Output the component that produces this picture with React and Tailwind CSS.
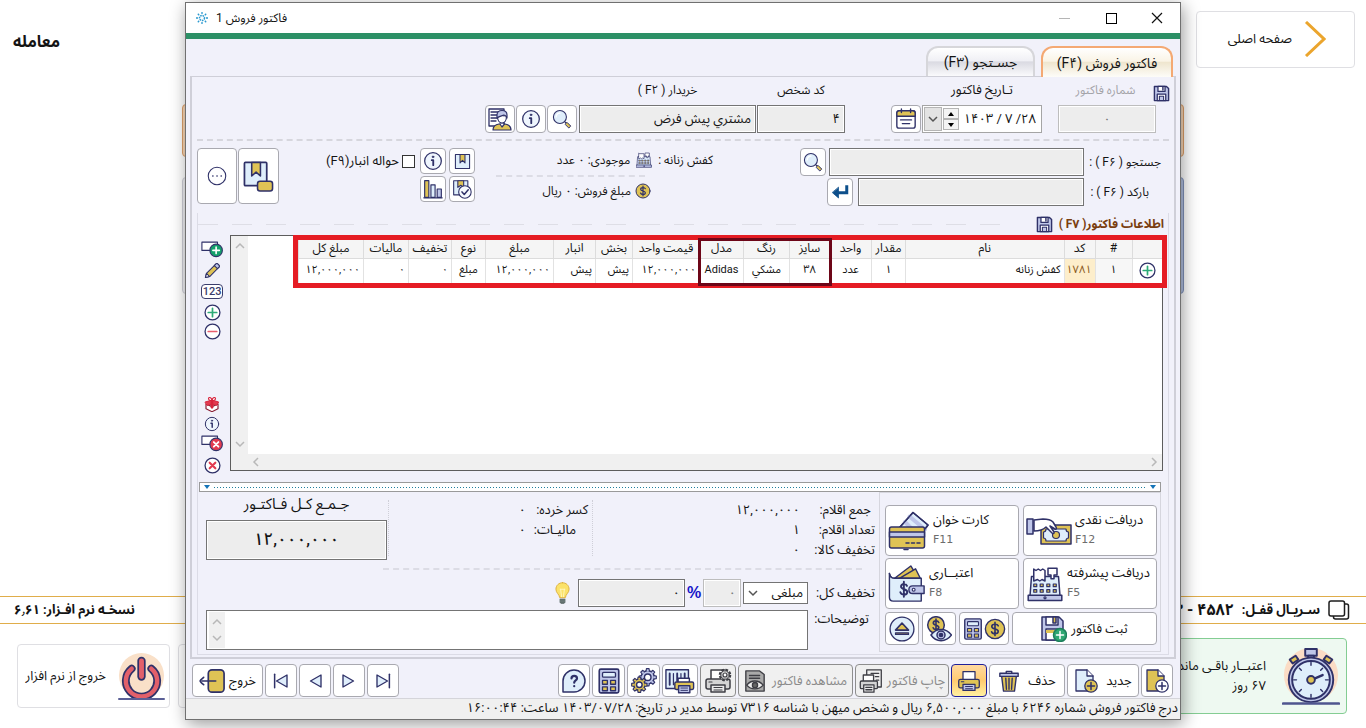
import React, { useState } from 'react';

const NAVY = '#2f3168';
const GOLD = '#dfc355';
const ICE = '#dfeefb';
const LILAC = '#bfc6e9';

function Svg({ className = 'w-6 h-6', children, box = '0 0 24 24' }) {
    return (
        <svg viewBox={box} className={`shrink-0 ${className}`} fill="none" stroke={NAVY} strokeWidth="1.5" strokeLinecap="round" strokeLinejoin="round" aria-hidden="true">
            {children}
        </svg>
    );
}

const FloppyIcon = ({ className }) => (
    <Svg className={className}>
        <path d="M2 2h17l3 3v17H2z" fill={LILAC} strokeWidth="2" />
        <path d="M7 2h10v7H7z" fill="#fff" strokeWidth="1.8" />
        <path d="M14 3.5v3.5" strokeWidth="2" />
        <path d="M6 13h12v9H6z" fill="#fff" strokeWidth="1.8" />
        <path d="M9 16h6v6H9z" fill={LILAC} />
    </Svg>
);

const FloppyPlusIcon = ({ className }) => (
    <Svg className={className} box="0 0 26 26">
        <path d="M1 1h17l4 4v19H1z" fill={LILAC} />
        <path d="M5 1h12v8H5z" fill="#fff" />
        <path d="M12 1h3v6h-3z" fill={GOLD} />
        <path d="M5 13h13v11H5z" fill="#fff" />
        <path d="M5 14h9v3H5z" fill={GOLD} stroke="none" />
        <circle cx="19" cy="19" r="6.500" fill="#2fa873" stroke="#1d7f5c" />
        <path d="M19 15.500v7M15.500 19h7" stroke="#fff" />
    </Svg>
);

const MagnifierIcon = ({ className }) => (
    <Svg className={className}>
        <path d="M14 14l3 3" />
        <path d="M16 18l2-2 4.500 4.500-2 2z" fill={GOLD} strokeWidth="1.2" />
        <circle cx="9.500" cy="9.500" r="7.800" fill={ICE} strokeWidth="1.3" />
        <path d="M5 9.500a4.500 4.500 0 0 1 4.500-4.500" stroke="#fff" />
    </Svg>
);

const InfoIcon = ({ className }) => (
    <Svg className={className}>
        <circle cx="12" cy="12" r="10" fill="#eef5fd" />
        <circle cx="12" cy="7" r="1" fill={NAVY} strokeWidth="1" />
        <path d="M10.500 11h1.800v6" strokeWidth="2.200" />
    </Svg>
);

const CalendarIcon = ({ className }) => (
    <Svg className={className}>
        <rect x="2" y="3" width="20" height="19" rx="2.500" fill="#fff" />
        <path d="M2 9V5.500A2.500 2.500 0 0 1 4.500 3h15A2.500 2.500 0 0 1 22 5.500V9z" fill={GOLD} />
        <path d="M7 1v4M17 1v4M6 13h12M8 17h8" />
    </Svg>
);

const CustomerIcon = ({ className }) => (
    <Svg className={className}>
        <path d="M1 2h15v17H1z" fill="#fff" strokeWidth="1.300" />
        <path d="M3 5h8M3 8h6M3 11h6M3 14h5" strokeWidth="1.300" />
        <path d="M5 23c0-4 3-5.500 6-6h6c3 .5 6 2 6 6z" fill={GOLD} strokeWidth="1.200" />
        <path d="M12 17l2 3 2.500-3" fill="#fff" strokeWidth="1.200" />
        <path d="M9.500 9.500c0 4 2 6.500 4.500 6.500s4.500-2.500 4.500-6.500" fill="#fff" strokeWidth="1.200" />
        <path d="M9 11V8c0-3 2-4.500 5-4.500S19 5 19 8v3c-1-2-2-3-3-3-2 1-5 1-7 3z" fill={LILAC} strokeWidth="1.200" />
    </Svg>
);

const EnterIcon = ({ className }) => (
    <Svg className={className}>
        <path d="M21 3v10H8" stroke="#0d4f8b" strokeWidth="4" strokeLinecap="butt" strokeLinejoin="miter" />
        <path d="M10 6v14l-8-7z" fill="#0d4f8b" stroke="#0d4f8b" strokeWidth="1" />
    </Svg>
);

const RegisterIcon = ({ className }) => (
    <Svg className={className}>
        <path d="M3 7h18l1 13H2z" fill={ICE} strokeWidth="1" />
        <path d="M4.500 2l1.500 1 1.500-1 1.500 1 1.500-1 1.500 1v7l-2-1-1.500 1L7 9l-2.500 1z" fill="#fff" strokeWidth="1" />
        <path d="M14 1.500h6v4.500h-2v2.500h-2V6h-2z" fill="#fff" strokeWidth="1" />
        <path d="M4.500 12h2v1.800h-2zM8.800 12h2v1.800h-2zM13.200 12h2v1.800h-2zM17.500 12h2v1.800h-2zM4.500 15.700h2v1.800h-2zM8.800 15.700h2v1.800h-2zM13.200 15.700h2v1.800h-2zM17.500 15.700h2v1.800h-2z" fill={GOLD} strokeWidth=".8" />
        <path d="M.8 19.500h22.400V23H.8z" fill={LILAC} strokeWidth="1" />
        <circle cx="12" cy="21.200" r=".7" strokeWidth=".8" />
    </Svg>
);

const CoinIcon = ({ className }) => (
    <Svg className={className}>
        <circle cx="12" cy="12" r="10.500" fill={GOLD} />
        <path d="M15.500 8.500C15 7 13.700 6.800 12 6.800c-2 0-3.500.9-3.500 2.500 0 3.600 7 1.800 7 5.200 0 1.700-1.500 2.700-3.500 2.700-1.800 0-3.200-.7-3.700-2.200M12 4.800v14.400" strokeWidth="1.800" />
    </Svg>
);

const BookmarkBoxIcon = ({ className }) => (
    <Svg className={className}>
        <path d="M2 2h20v20H2z" fill={ICE} />
        <path d="M8.500 2h7v12L12 10.500 8.500 14z" fill={GOLD} />
    </Svg>
);

const BookmarkTagIcon = ({ className }) => (
    <Svg className={className} box="0 0 32 32">
        <rect x="1.500" y="1.500" width="23" height="24" rx="1" fill={ICE} strokeWidth="1.800" />
        <path d="M9 1.500h9v14l-4.500-4-4.500 4z" fill={GOLD} strokeWidth="1.600" />
        <rect x="15" y="21" width="15.500" height="10" rx="2.500" fill={GOLD} strokeWidth="1.600" />
    </Svg>
);

const BoxCheckIcon = ({ className }) => (
    <Svg className={className}>
        <path d="M2 2h17v17H2z" fill={ICE} strokeWidth="1.300" />
        <path d="M7 2h7v8l-3.500-2.500L7 10z" fill={GOLD} strokeWidth="1.300" />
        <circle cx="15.500" cy="15.500" r="7.500" fill="#f6f9fe" strokeWidth="1.300" />
        <path d="M12 15.500l2.700 3 4.800-5.500" strokeWidth="1.800" />
    </Svg>
);

const ChartIcon = ({ className }) => (
    <Svg className={className}>
        <path d="M2 2h5v20H2z" fill={GOLD} strokeWidth="1.400" />
        <path d="M9.500 7h5v15h-5z" fill={ICE} strokeWidth="1.400" />
        <path d="M17 12h5v10h-5z" fill={LILAC} strokeWidth="1.400" />
        <path d="M1 22.500h22" />
    </Svg>
);

const DotsIcon = ({ className }) => (
    <Svg className={className}>
        <circle cx="12" cy="12" r="10.500" strokeWidth="1.300" />
        <path d="M7 12h.1M12 12h.1M17 12h.1" strokeWidth="2" />
    </Svg>
);

const RowAddIcon = ({ className, remove = false }) => (
    <Svg className={className} box="0 0 24 18">
        <path d="M1 1.500h17v9H1z" fill="#fff" strokeWidth="1.200" />
        <circle cx="16.500" cy="10.500" r="6.800" fill={remove ? '#e23b50' : '#14a06a'} strokeWidth="1.200" />
        {remove
            ? <path d="M14 8l5 5M19 8l-5 5" stroke="#fff" strokeWidth="2" />
            : <path d="M16.500 7v7M13 10.500h7" stroke="#fff" strokeWidth="1.800" />}
    </Svg>
);

const PencilIcon = ({ className }) => (
    <Svg className={className}>
        <path d="M2 22l1.500-6L17 2.500c1.500-1.500 6 3 4.500 4.500L8 20.500z" fill={GOLD} />
        <path d="M2 22l1.500-6L8 20.500z" fill="#fff" />
        <path d="M14.500 5L17 2.500c1.500-1.500 6 3 4.500 4.500L19 9.500z" fill={LILAC} />
    </Svg>
);

const CirclePlusIcon = ({ className }) => (
    <Svg className={className}>
        <circle cx="12" cy="12" r="10.500" fill="#fff" strokeWidth="1.800" />
        <path d="M12 6v12M6 12h12" stroke="#2eab78" strokeWidth="2.400" />
    </Svg>
);

const CircleMinusIcon = ({ className }) => (
    <Svg className={className}>
        <circle cx="12" cy="12" r="10.500" fill="#fff" strokeWidth="1.800" />
        <path d="M6 12h12" stroke="#e85d6d" strokeWidth="2.400" />
    </Svg>
);

const CircleXIcon = ({ className }) => (
    <Svg className={className}>
        <circle cx="12" cy="12" r="10.500" fill="#fff" strokeWidth="1.800" />
        <path d="M8 8l8 8M16 8l-8 8" stroke="#e23b50" strokeWidth="3" />
    </Svg>
);

const GiftIcon = ({ className }) => (
    <Svg className={className}>
        <g stroke="#d8243c">
            <path d="M3 12l9 4 9-4v7l-9 4.500L3 19z" fill="#fff" stroke="#8a2035" strokeWidth="1.800" />
            <path d="M2 9l10-3 10 3-3 5-7-2-7 2z" fill="#e23b50" />
            <path d="M12 7C8 7 6 5 7 3s5 0 5 4zM12 7c4 0 6-2 5-4s-5 0-5 4z" fill="#fff" strokeWidth="1.800" />
            <path d="M12 7v10" strokeWidth="4" />
        </g>
    </Svg>
);

const CardsIcon = ({ className }) => (
    <Svg className={className} box="0 0 42 40">
        <path d="M12 16L25 1.500 40 14 33 24z" fill={ICE} />
        <path d="M17 11L30 24M21.500 5.500L37 18.500" stroke={LILAC} strokeWidth="4" />
        <path d="M12 16L25 1.500 40 14 36 19" />
        <rect x="1.500" y="16" width="35" height="21" rx="2" fill={GOLD} />
        <path d="M1.500 21h35v5h-35z" fill={LILAC} />
        <path d="M18 32h3M23.500 32h3M29 32h3M16 38.500h4" />
    </Svg>
);

const CashIcon = ({ className }) => (
    <Svg className={className} box="0 0 46 28">
        <path d="M15 8h30v19H15z" fill={GOLD} />
        <path d="M20 12h20c0 2 1 3 2.500 3v6c-1.500 0-2.500 1-2.500 3H20c0-2-1-3-2.500-3v-6c1.500 0 2.500-1 2.500-3z" fill={ICE} strokeWidth="1.200" />
        <circle cx="30" cy="18" r="3.500" fill={GOLD} strokeWidth="1.200" />
        <path d="M8 3l9-1c5 0 8 1 10 3l3 5c1 1.500 0 2.500-1 2l-5-3 4 6c.5 1.500-1 2-2 1l-6-6c-3 3-8 4-12 4z" fill="#fff" />
        <path d="M1 2h6v15H1z" fill={LILAC} />
    </Svg>
);

const WalletIcon = ({ className }) => (
    <Svg className={className} box="0 0 40 40">
        <path d="M7 14L24 1l8 13z" fill={GOLD} />
        <path d="M12 14L29 4l5 10z" fill={GOLD} />
        <path d="M1.500 9c1 4 3 5 5 5" />
        <path d="M1.500 9v25c0 2.500 1 4 4 4H35V14H7c-3 0-5-2-5.500-5z" fill={ICE} />
        <path d="M22 26c0-3 2-4 4-4h12v8H26c-2 0-4-1-4-4z" fill={LILAC} />
        <circle cx="27" cy="26" r="1.500" fill="#fff" strokeWidth="1.200" />
        <path d="M20 22c-.5-1.500-1.800-2-3.300-2-1.700 0-3 1-3 2.600 0 3.600 6.600 2.200 6.600 5.800 0 1.800-1.500 2.800-3.500 2.800s-3.300-.8-3.800-2.500M16.700 17.500v16" strokeWidth="2" />
    </Svg>
);

const CalcIcon = ({ className }) => (
    <Svg className={className}>
        <rect x="3" y="1" width="18" height="22" rx="1.500" fill={LILAC} />
        <rect x="6" y="4" width="12" height="4.500" rx="1" fill={ICE} strokeWidth="1.200" />
        <path d="M6 11.500h4.500v3.500H6zM13.500 11.500H18v3.500h-4.500zM6 17.500h4.500V21H6zM13.500 17.500H18V21h-4.500z" fill={GOLD} strokeWidth="1.200" />
    </Svg>
);

const CoinEyeIcon = ({ className }) => (
    <Svg className={className} box="0 0 26 26">
        <circle cx="10" cy="9" r="8.300" fill={GOLD} />
        <path d="M12.800 6.500c-.5-1.200-1.500-1.600-2.800-1.600-1.500 0-2.700.8-2.700 2.100 0 2.800 5.500 1.600 5.500 4.300 0 1.400-1.200 2.200-2.800 2.200-1.400 0-2.500-.6-2.900-1.800M10 3v12" strokeWidth="1.600" />
        <path d="M5 19c5-7.500 15-7.500 20.500 0-5.500 7.500-15.500 7.500-20.500 0z" fill={ICE} />
        <circle cx="15" cy="19" r="4" fill={LILAC} />
        <circle cx="15" cy="19" r="1.600" fill={NAVY} />
    </Svg>
);

const EjectIcon = ({ className }) => (
    <Svg className={className}>
        <circle cx="12" cy="12" r="11" fill={ICE} strokeWidth="1.200" />
        <path d="M12 6.500l6 6.500H6z" fill={GOLD} />
        <path d="M6 15.500h12v1.500H6z" fill={GOLD} strokeWidth="1.100" />
    </Svg>
);

const BulbIcon = ({ className }) => (
    <Svg className={className} box="0 0 16 24">
        <path d="M8 1C4 1 1 4 1 8c0 4 3.500 5 4 9h6c.5-4 4-5 4-9 0-4-3-7-7-7z" fill="#fbe26a" stroke="#dcae3c" strokeWidth="1" />
        <path d="M6 8l1 8M10 8l-1 8M5.500 8h5" stroke="#fff6c0" strokeWidth="1" />
        <path d="M5 18h6v4l-1.500 1.500h-3L5 22z" fill="#4d5a58" stroke="none" />
        <path d="M5 19.500h6M5 21.500h6" stroke="#9aa" strokeWidth=".7" />
    </Svg>
);

const PageAddIcon = ({ className, gold = false }) => (
    <Svg className={className}>
        <path d="M2 1h11l6 6v15H2z" fill={gold ? GOLD : ICE} strokeWidth="1.300" />
        <path d="M13 1v6h6" fill="#fff" strokeWidth="1.300" />
        <circle cx="17" cy="17" r="6.200" fill={gold ? '#fff' : GOLD} strokeWidth="1.300" />
        <path d="M17 13.500v7M13.500 17h7" />
    </Svg>
);

const TrashIcon = ({ className }) => (
    <Svg className={className}>
        <path d="M4 7h16l-2 16H6z" fill={GOLD} />
        <path d="M8.500 9l.7 12M12 9v12M15.500 9l-.7 12" />
        <path d="M2 3.500h20V7H2z" fill={LILAC} />
        <path d="M9 3.500v-2h6v2" />
    </Svg>
);

const PrinterIcon = ({ className, muted = false, gear = false }) => (
    <Svg className={className} box="0 0 28 26">
        <g stroke={muted ? '#3e3e44' : NAVY}>
            <path d="M7 11V2h14v9" fill="#fff" />
            <rect x="2" y="11" width="24" height="10" rx="2" fill={muted ? '#d4d4d4' : GOLD} />
            <path d="M7 17h14v7H7z" fill={muted ? '#e9e9e9' : LILAC} />
            <path d="M10 19.500h8M10 22h8M5 14h3" strokeWidth="1.200" />
            {gear && (
                <>
                    <circle cx="21" cy="7" r="5" fill="#ddd" strokeDasharray="2.500 1.400" strokeWidth="2.600" strokeLinecap="butt" />
                    <circle cx="21" cy="7" r="4.200" fill="#ddd" strokeWidth="1" />
                    <circle cx="21" cy="7" r="2" fill="#fff" strokeWidth="1.200" />
                </>
            )}
        </g>
    </Svg>
);

const PrintPagesIcon = ({ className }) => (
    <Svg className={className} box="0 0 28 28">
        <g stroke="#3e3e44">
            <path d="M9 1h17v20H9z" fill="#eee" />
            <path d="M14 5h9M19 9h4M20 13h3" />
            <path d="M5 14V7h12v7" fill="#fff" />
            <rect x="1.500" y="14" width="20" height="9" rx="1.500" fill="#d4d4d4" />
            <path d="M5.500 18.500h12V27h-12z" fill="#e9e9e9" />
            <path d="M8 21.500h7M8 24.200h7" />
        </g>
    </Svg>
);

const PreviewIcon = ({ className }) => (
    <Svg className={className}>
        <g stroke="#3e3e44">
            <path d="M2 1h15l5 4v18H2z" fill="#a9a9a9" />
            <path d="M6 6h11M6 9h11" />
            <path d="M3 16.500c4.500-6 13-6 18 0-5 5.500-13.500 5.500-18 0z" fill="#eee" />
            <circle cx="12" cy="16.500" r="2.800" fill="#666" />
        </g>
    </Svg>
);

const BarcodePrintIcon = ({ className }) => (
    <Svg className={className} box="0 0 32 28">
        <path d="M1 2h24v20H1z" fill={ICE} />
        <path d="M5 6v12M13 6v8M21 6v4" strokeWidth="2" />
        <path d="M9 6v12M17 6v5" strokeWidth="1.300" />
        <path d="M14 15v-4h12v4" fill="#fff" />
        <rect x="10.500" y="15" width="20" height="8" rx="1.500" fill={GOLD} />
        <path d="M14.500 19h12v7.500h-12z" fill={LILAC} />
        <path d="M17 21.500h7M17 24h7" strokeWidth="1" />
    </Svg>
);

const Gear = ({ x, y, r, fill }) => (
    <g>
        <circle cx={x} cy={y} r={r} fill={fill} />
        {[0, 45, 90, 135, 180, 225, 270, 315].map((a) => (
            <path key={a} transform={`translate(${x} ${y}) rotate(${a})`} d={`M-1.800 ${-r + 0.6}L-1.400 ${-r - 2.2}H1.400L1.800 ${-r + 0.6}`} fill={fill} strokeWidth="1.200" />
        ))}
        <circle cx={x} cy={y} r={r - 0.9} fill={fill} stroke="none" />
        <circle cx={x} cy={y} r={r * 0.5} fill="#fff" />
    </g>
);

const GearsIcon = ({ className }) => (
    <Svg className={className} box="0 0 30 28">
        <Gear x={19} y={10} r={7} fill={LILAC} />
        <Gear x={10} y={18} r={6} fill={GOLD} />
    </Svg>
);

const HelpIcon = ({ className }) => (
    <Svg className={className}>
        <path d="M1 23V12A11 11 0 1 1 12 23z" fill={ICE} />
        <path d="M9.500 9.500c0-3.500 5.500-3.500 5.500 0 0 2-2.800 2-2.800 4.200M12.200 17v.2" strokeWidth="2.200" />
    </Svg>
);

const ExitIcon = ({ className }) => (
    <Svg className={className} box="0 0 28 28">
        <rect x="10" y="2" width="17" height="24" rx="4" fill={GOLD} strokeWidth="1.800" />
        <path d="M18 14H3" strokeWidth="1.800" />
        <path d="M5 10c-5 4-5 4 0 8" strokeWidth="1.800" />
    </Svg>
);

const StepIcon = ({ className, flip = false, bar = false }) => (
    <Svg className={`${className} ${flip ? '-scale-x-100' : ''}`}>
        <path d="M20 4v16L6 12z" fill={ICE} strokeWidth="1.800" />
        {bar && <path d="M3.500 3v18" strokeWidth="2" />}
    </Svg>
);

const PowerIcon = ({ className }) => (
    <Svg className={className} box="0 0 48 48">
        <circle cx="24" cy="23" r="23" fill="#f9e0c8" stroke="none" />
        <path d="M14 16a16 16 0 1 0 20 0" strokeWidth="8" />
        <path d="M24 8v16" strokeWidth="8.500" />
        <path d="M14 16a16 16 0 1 0 20 0" strokeWidth="4.500" stroke="#e2606a" />
        <path d="M24 8v16" strokeWidth="5" stroke="#e2606a" />
        <path d="M1 47h46" stroke="#5a5f96" strokeWidth="2" />
    </Svg>
);

const StopwatchIcon = ({ className }) => (
    <Svg className={className} box="0 0 60 60">
        <circle cx="30" cy="29" r="28" fill="#fbdcc5" stroke="none" />
        <path d="M24 2h12v7H24z" fill={LILAC} strokeWidth="2" />
        <path d="M27 9h6v6h-6z" fill={LILAC} strokeWidth="2" />
        <path d="M8 13l6-4 3 4-6 4zM52 13l-6-4-3 4 6 4z" fill={GOLD} strokeWidth="2" />
        <circle cx="30" cy="34" r="23" fill={LILAC} strokeWidth="2" />
        <circle cx="30" cy="34" r="19.500" fill={ICE} strokeWidth="2" />
        <path d="M30 16v3M30 49v3M12 34h3M45 34h3M18 22l2 2M42 22l-2 2M18 46l2-2M42 46l-2-2" strokeWidth="1.500" />
        <path d="M33 33l9-4" strokeWidth="2.500" />
        <circle cx="30" cy="34" r="4" fill={GOLD} strokeWidth="2" />
        <path d="M1 58.500h58" strokeWidth="2.500" stroke="#4f558f" />
    </Svg>
);

const CopyIcon = ({ className }) => (
    <svg viewBox="0 0 22 20" className={`shrink-0 ${className}`} fill="#fff" stroke="#1d1d1d" strokeWidth="1.500" aria-hidden="true">
        <rect x="5.500" y="4" width="15" height="15" rx="2" />
        <rect x="1" y="1" width="15.500" height="15" rx="2" />
    </svg>
);

const Chevron = ({ className, d = 'M2 4l4 4 4-4' }) => (
    <svg viewBox="0 0 12 12" className={`shrink-0 ${className}`} fill="none" stroke="currentColor" strokeWidth="1.500" aria-hidden="true">
        <path d={d} />
    </svg>
);

const field = 'border border-[#747474] bg-[#ededed] shadow-[inset_0_0_0_1px_#fff] outline-none px-1';
const mutedField = 'border border-[#bdbdbd] bg-[#ededed] shadow-[inset_0_0_0_1px_#fff] text-[#777]';
const btn = 'flex items-center justify-center bg-white border border-[#a9a9b0] rounded';
const headLabel = 'flex items-center justify-center h-6 mb-[3px]';

function IconButton({ label, className, children }) {
    return <button type="button" aria-label={label} className={`${btn} shrink-0 ${className}`}>{children}</button>;
}

const columns = [
    { head: '', width: 'w-[30px]', cell: 'px-0' },
    { head: '#', width: 'w-[37px]', value: '۱', cell: 'text-center bg-[#f7f7f7]' },
    { head: 'کد', width: 'w-[31px]', value: '۱۷۸۱', cell: 'text-center bg-[#fdeecb] text-[#8a5a1c]' },
    { head: 'نام', width: '', value: 'کفش زنانه', cell: 'text-right' },
    { head: 'مقدار', width: 'w-[34px]', value: '۱', cell: 'text-center' },
    { head: 'واحد', width: 'w-[42px]', value: 'عدد', cell: 'text-center' },
    { head: 'سایز', width: 'w-[40px]', value: '۳۸', cell: 'text-center' },
    { head: 'رنگ', width: 'w-[46px]', value: 'مشکي', cell: 'text-center' },
    { head: 'مدل', width: 'w-[44px]', value: 'Adidas', cell: 'text-center' },
    { head: 'قیمت واحد', width: 'w-[67px]', value: '۱۲,۰۰۰,۰۰۰', cell: 'text-right' },
    { head: 'بخش', width: 'w-[37px]', value: 'پیش', cell: 'text-right' },
    { head: 'انبار', width: 'w-[42px]', value: 'پیش', cell: 'text-right' },
    { head: 'مبلغ', width: 'w-[68px]', value: '۱۲,۰۰۰,۰۰۰', cell: 'text-right' },
    { head: 'نوع', width: 'w-[34px]', value: 'مبلغ', cell: 'text-center' },
    { head: 'تخفیف', width: 'w-[43px]', value: '۰', cell: 'text-right' },
    { head: 'مالیات', width: 'w-[45px]', value: '۰', cell: 'text-right' },
    { head: 'مبلغ کل', width: 'w-[65px]', value: '۱۲,۰۰۰,۰۰۰', cell: 'text-right' },
];

function TitleBar() {
    return (
        <header dir="ltr" className="h-[30px] bg-white flex items-center pl-2.5 pr-[17px] text-xs">
            <svg viewBox="0 0 12 12" className="w-3 h-3 mr-2" fill="none" stroke="#2c9ad0" strokeWidth="1.500" aria-hidden="true">
                <circle cx="6" cy="6" r="2.500" strokeDasharray="1.600 .8" />
                <path d="M6 0v2M6 10v2M0 6h2M10 6h2M1.800 1.800l1.400 1.400M8.800 8.800l1.400 1.400M10.200 1.800L8.800 3.200M3.200 8.800l-1.400 1.400" strokeWidth="1.300" />
            </svg>
            <h1 dir="rtl" className="flex-1 text-end">فاکتور فروش 1</h1>
            <div className="flex items-center gap-[34px]">
                <button type="button" aria-label="کوچک کردن" className="w-3 h-3 flex items-center"><span className="block w-[11px] h-px bg-[#b5b5b5]" /></button>
                <button type="button" aria-label="بزرگ کردن" className="w-3 h-3 flex items-center justify-center"><span className="block w-[11px] h-[11px] border border-black" /></button>
                <button type="button" aria-label="بستن" className="w-3 h-3">
                    <svg viewBox="0 0 12 12" className="w-3 h-3" stroke="#111" strokeWidth="1.200"><path d="M1 1l10 10M11 1L1 11" /></svg>
                </button>
            </div>
        </header>
    );
}

function InvoiceHead() {
    return (
        <div className="flex items-end h-14 pr-1">
            <div className="w-28">
                <div className="flex items-end h-6 mb-[3px]">
                    <FloppyIcon className="w-[17px] h-[17px]" />
                    <label htmlFor="number" className="flex-1 h-6 leading-6 text-center text-[#a3a3a8]">شماره فاکتور</label>
                </div>
                <div className="pr-3.5">
                    <input id="number" disabled defaultValue="۰" className={`${mutedField} w-full h-7 text-center`} />
                </div>
            </div>
            <div className="w-[120px] mr-4">
                <label htmlFor="date" className={`${headLabel} text-[13px]`}>تـاریخ فاکتور</label>
                <div dir="ltr" className="flex items-center h-7 bg-white border border-[#a5a5a5] p-px">
                    <button type="button" aria-label="انتخاب تاریخ" className="w-[18px] h-6 flex items-center justify-center bg-[#e3e3e3] border border-[#b5b5b5] text-[#555]">
                        <Chevron className="w-3 h-3" />
                    </button>
                    <div className="flex flex-col w-4 ml-px text-black">
                        <button type="button" aria-label="بیشتر" className="h-[11px] bg-[#f4f4f4] border border-[#b5b5b5] flex items-center justify-center"><svg viewBox="0 0 6 4" className="w-1.5 h-1"><path d="M0 4h6L3 0z" /></svg></button>
                        <button type="button" aria-label="کمتر" className="h-[11px] bg-[#f4f4f4] border border-[#b5b5b5] flex items-center justify-center"><svg viewBox="0 0 6 4" className="w-1.5 h-1"><path d="M0 0h6L3 4z" /></svg></button>
                    </div>
                    <input id="date" defaultValue="۱۴۰۳ / ۷ /۲۸" className="flex-1 min-w-0 h-full text-right pr-1 text-[13px] outline-none" />
                </div>
            </div>
            <IconButton label="تقویم" className="w-[30px] h-7 mr-px"><CalendarIcon className="w-[22px] h-[22px]" /></IconButton>
            <div className="w-[88px] mr-[46px]">
                <label htmlFor="person" className={headLabel}>کد شخص</label>
                <input id="person" defaultValue="۴" className={`${field} w-full h-7 text-[13px]`} />
            </div>
            <div className="w-[177px] mr-px">
                <label htmlFor="buyer" className={headLabel}>خریدار ( F۲ )</label>
                <input id="buyer" defaultValue="مشتري پیش فرض" className={`${field} w-full h-7 text-[13px]`} />
            </div>
            <div className="flex gap-px mr-0.5">
                <IconButton label="جستجوی خریدار" className="w-[30px] h-7"><MagnifierIcon className="w-5 h-5" /></IconButton>
                <IconButton label="اطلاعات خریدار" className="w-[30px] h-7"><InfoIcon className="w-5 h-5" /></IconButton>
                <IconButton label="پرونده خریدار" className="w-[30px] h-7"><CustomerIcon className="w-6 h-6" /></IconButton>
            </div>
        </div>
    );
}

function ItemSearch() {
    return (
        <div className="flex items-start pt-[7px] pr-[13px] pl-[5px]">
            <div className="flex flex-col gap-0.5">
                <div className="flex items-center">
                    <label htmlFor="search" className="w-[77px] whitespace-nowrap">جستجو ( F۶ ) :</label>
                    <input id="search" className={`${field} w-[255px] h-7`} />
                    <IconButton label="جستجو" className="w-[26px] h-7 mr-[3px]"><MagnifierIcon className="w-5 h-5" /></IconButton>
                </div>
                <div className="flex items-center">
                    <label htmlFor="barcode" className="w-[77px] pr-3 whitespace-nowrap">بارکد ( F۶ ) :</label>
                    <input id="barcode" className={`${field} w-[226px] h-7`} />
                    <IconButton label="ثبت بارکد" className="w-[26px] h-7 mr-[5px]"><EnterIcon className="w-[18px] h-[18px]" /></IconButton>
                </div>
            </div>
            <div className="w-[170px] mr-[87px]">
                <div className="flex items-center h-6 gap-1.5 whitespace-nowrap">
                    <span>کفش زنانه :</span>
                    <RegisterIcon className="w-4 h-4" />
                    <span>موجودی: ۰ عدد</span>
                </div>
                <div className="ml-[-47px] mr-[68px] h-[5px] border-b-2 border-dashed border-[#dcdce5]" />
                <div className="flex items-center h-7 gap-1 pr-[62px] whitespace-nowrap">
                    <CoinIcon className="w-4 h-4" />
                    <span>مبلغ فروش: ۰ ریال</span>
                </div>
            </div>
            <div className="grid grid-cols-2 gap-x-[3px] gap-y-0.5 mr-[68px]">
                <IconButton label="کالا" className="w-[26px] h-[26px]"><BookmarkBoxIcon className="w-[17px] h-[17px]" /></IconButton>
                <IconButton label="اطلاعات کالا" className="w-[26px] h-[26px]"><InfoIcon className="w-5 h-5" /></IconButton>
                <IconButton label="تایید کالا" className="w-[26px] h-[26px]"><BoxCheckIcon className="w-5 h-5" /></IconButton>
                <IconButton label="نمودار" className="w-[26px] h-[26px]"><ChartIcon className="w-5 h-5" /></IconButton>
            </div>
            <label className="flex items-center gap-[3px] mr-[5px] h-[26px] text-[13px] whitespace-nowrap">
                <input type="checkbox" className="appearance-none w-[13px] h-[13px] bg-white border border-[#333] checked:bg-[#333]" />
                حواله انبار(F۹)
            </label>
            <div className="flex gap-px mr-auto">
                <IconButton label="انتخاب کالا" className="w-[41px] h-14"><BookmarkTagIcon className="w-[31px] h-[31px]" /></IconButton>
                <IconButton label="بیشتر" className="w-10 h-14"><DotsIcon className="w-5 h-5" /></IconButton>
            </div>
        </div>
    );
}

function ItemsGrid() {
    return (
        <div className="flex pr-[5px]">
            <div className="flex-1 min-w-0 h-[236px] border border-[#5d5d5d] bg-white flex flex-col">
                <div className="flex-1 flex">
                    <div className="flex-1 min-w-0 pt-1 pl-[50px]">
                        <div className="relative">
                            <table className="w-full table-fixed border-collapse">
                                <thead>
                                    <tr className="h-[18px]">
                                        {columns.map((c, i) => (
                                            <th key={i} className={`${c.width} p-0 font-normal whitespace-nowrap leading-[17px] border-l border-b border-[#dcdcdc] bg-[#f5f5f5]`}>{c.head}</th>
                                        ))}
                                    </tr>
                                </thead>
                                <tbody>
                                    <tr className="h-[25px]">
                                        {columns.map((c, i) => (
                                            <td key={i} className={`px-[3px] py-0 text-[11px] whitespace-nowrap border-l border-[#e2e2e2] ${c.cell}`}>
                                                {i === 0 ? <CirclePlusIcon className="w-[17px] h-[17px] mx-auto block" /> : c.value}
                                            </td>
                                        ))}
                                    </tr>
                                </tbody>
                            </table>
                            {/* highlight frames drawn over the row */}
                            <div className="absolute -inset-[5px] border-[5px] border-[#e51c24] pointer-events-none" />
                            <div className="absolute left-[400px] w-[134px] -top-0.5 -bottom-[3px] border-[3px] border-[#6d0618] pointer-events-none" />
                        </div>
                    </div>
                    <div className="w-[17px] bg-[#f0f0f0] flex flex-col items-center justify-between py-1 text-[#b8b8b8]">
                        <Chevron className="w-3 h-3" d="M2 8l4-4 4 4" />
                        <Chevron className="w-3 h-3" />
                    </div>
                </div>
                <div className="h-4 bg-[#f0f0f0] flex items-center justify-between pl-[19px] pr-0.5 text-[#b8b8b8]">
                    <Chevron className="w-3 h-3" d="M4 2l4 4-4 4" />
                    <Chevron className="w-3 h-3" d="M8 2L4 6l4 4" />
                </div>
            </div>
            <div className="w-7 mr-1 flex flex-col items-center pt-[5px]">
                <button type="button" aria-label="افزودن ردیف"><RowAddIcon className="w-[22px] h-[18px]" /></button>
                <button type="button" aria-label="ویرایش" className="mt-1"><PencilIcon className="w-[17px] h-[17px]" /></button>
                <button type="button" aria-label="سریال" className="mt-[5px] w-[22px] h-[15px] rounded-sm border border-[#3a3c6c] bg-white text-[11px] leading-none font-medium text-[#3a3c6c] flex items-center justify-center">123</button>
                <button type="button" aria-label="افزایش" className="mt-[5px]"><CirclePlusIcon className="w-[17px] h-[17px]" /></button>
                <button type="button" aria-label="کاهش" className="mt-0.5"><CircleMinusIcon className="w-[17px] h-[17px]" /></button>
                <button type="button" aria-label="هدیه" className="mt-auto"><GiftIcon className="w-4 h-4" /></button>
                <button type="button" aria-label="اطلاعات" className="mt-1"><InfoIcon className="w-4 h-4" /></button>
                <button type="button" aria-label="حذف ردیف" className="mt-0.5"><RowAddIcon remove className="w-[22px] h-[18px]" /></button>
                <button type="button" aria-label="حذف همه" className="mt-[5px] mb-[-3px]"><CircleXIcon className="w-[17px] h-[17px]" /></button>
            </div>
        </div>
    );
}

function Splitter() {
    return (
        <div className="mt-[11px] mr-[7px] ml-px h-2.5 border border-[#9a9a9a] bg-white flex items-center gap-1 px-1">
            <svg viewBox="0 0 6 4" className="w-1.5 h-1" fill="#1473b8"><path d="M0 0h6L3 4z" /></svg>
            <div className="flex-1 h-px bg-[repeating-linear-gradient(to_right,#1f7f9e_0_1px,transparent_1px_3px)]" />
            <svg viewBox="0 0 6 4" className="w-1.5 h-1" fill="#1473b8"><path d="M0 0h6L3 4z" /></svg>
        </div>
    );
}

const payments = [
    { label: 'دریافت نقدی', hint: 'F12', icon: CashIcon, size: 'w-[46px] h-7' },
    { label: 'کارت خوان', hint: 'F11', icon: CardsIcon, size: 'w-[42px] h-10' },
    { label: 'دریافت پیشرفته', hint: 'F5', icon: RegisterIcon, size: 'w-[38px] h-9' },
    { label: 'اعتبــاری', hint: 'F8', icon: WalletIcon, size: 'w-[38px] h-10' },
];

function PaymentPanel() {
    return (
        <div className="w-[282px] shrink-0 mr-[7px] border border-[#d6d6de] pt-3 pb-1.5 pr-[3px] pl-[5px] flex flex-col gap-0.5">
            <div className="grid grid-cols-2 gap-x-1 gap-y-0.5">
                {payments.map((p) => (
                    <button key={p.hint} type="button" dir="ltr" className={`${btn} h-[51px] !justify-start pl-0.5 gap-[3px]`}>
                        <p.icon className={p.size} />
                        <span className="flex flex-col items-start h-full pt-1">
                            <span dir="rtl" className="text-[13px] leading-5 whitespace-nowrap">{p.label}</span>
                            <span className="font-['DejaVu_Sans'] text-[11px] leading-5 text-[#6d6d6d]">{p.hint}</span>
                        </span>
                    </button>
                ))}
            </div>
            <div className="flex gap-[3px] mt-px">
                <button type="button" className={`${btn} flex-1 h-[33px] gap-1 text-[13px]`}>
                    ثبت فاکتور
                    <FloppyPlusIcon className="w-[26px] h-[26px]" />
                </button>
                <IconButton label="محاسبه" className="w-[50px] h-[33px] flex-row-reverse"><CalcIcon className="w-[22px] h-6" /><CoinIcon className="w-[22px] h-[22px]" /></IconButton>
                <IconButton label="نمایش سود" className="w-[34px] h-[33px]"><CoinEyeIcon className="w-[26px] h-[26px]" /></IconButton>
                <IconButton label="باز کردن کشو" className="w-[34px] h-[33px]"><EjectIcon className="w-[26px] h-[26px]" /></IconButton>
            </div>
        </div>
    );
}

function Totals() {
    const [mode, setMode] = useState('amount');
    return (
        <div className="flex-1 min-w-0 pr-1 pl-2 text-[13px]">
            <div className="flex items-start h-[69px] pt-2">
                <dl className="flex-1 grid grid-cols-[75px_1fr] auto-rows-[20px] items-center whitespace-nowrap">
                    <dt className="pr-1">جمع اقلام:</dt><dd>۱۲,۰۰۰,۰۰۰</dd>
                    <dt>تعداد اقلام:</dt><dd>۱</dd>
                    <dt>تخفیف کالا:</dt><dd>۰</dd>
                </dl>
                <dl className="w-[205px] h-14 border-x border-dotted border-[#cfcfd8] pr-1 grid grid-cols-[62px_1fr] auto-rows-[20px] items-center content-start whitespace-nowrap">
                    <dt>کسر خرده:</dt><dd>۰</dd>
                    <dt className="pr-3">مالیـات:</dt><dd>۰</dd>
                </dl>
                <div className="w-[181px] mr-px -mt-2 text-center">
                    <label htmlFor="total" className="block text-[15px] leading-6 h-7">جـمـع کـل فـاکتـور</label>
                    <input id="total" readOnly defaultValue="۱۲,۰۰۰,۰۰۰" className={`${field} block w-full h-10 text-center text-[17px] font-medium`} />
                </div>
            </div>
            <div className="h-[9px] mr-[13px] ml-[177px] border-b-2 border-dashed border-[#dcdce5]" />
            <div className="flex items-center h-7 mt-[9px]">
                <label htmlFor="mode" className="w-[67px] whitespace-nowrap">تخفیف کل:</label>
                <div className="relative w-[65px]">
                    <select id="mode" value={mode} onChange={(e) => setMode(e.target.value)} className="appearance-none w-full h-[22px] bg-white border border-[#747474] pr-1 leading-5 outline-none">
                        <option value="amount">مبلغی</option>
                        <option value="percent">درصدی</option>
                    </select>
                    <Chevron className="w-3 h-3 absolute left-1 top-[5px] text-[#555] pointer-events-none" />
                </div>
                <input aria-label="درصد تخفیف" disabled defaultValue="۰" className={`${mutedField} w-[38px] h-7 mr-0.5 px-1`} />
                <span className="w-[18px] text-center font-bold text-base leading-5 text-[#1515c8] font-[Liberation_Sans]">%</span>
                <input aria-label="مبلغ تخفیف" defaultValue="۰" className={`${field} w-[107px] h-7`} />
                <button type="button" aria-label="راهنما" className="mr-2"><BulbIcon className="w-[15px] h-6" /></button>
            </div>
            <div className="flex mt-[3px]">
                <label htmlFor="note" className="w-[67px] pr-1.5 whitespace-nowrap">توضیحات:</label>
                <div className="flex-1 h-10 flex bg-white border border-[#747474] p-px">
                    <textarea id="note" className="flex-1 resize-none outline-none px-1" />
                    <div className="w-4 ml-px bg-[#f0f0f0] flex flex-col items-center justify-between py-1 text-[#b8b8b8]">
                        <Chevron className="w-3 h-3" d="M2 8l4-4 4 4" />
                        <Chevron className="w-3 h-3" />
                    </div>
                </div>
            </div>
        </div>
    );
}

function Toolbar() {
    return (
        <div className="flex items-center gap-0.5 mt-[5px] pr-[7px] pl-1.5 h-[33px] text-[13px] whitespace-nowrap">
            <IconButton label="فاکتور جدید" className="w-8 h-[33px]"><PageAddIcon gold className="w-6 h-6" /></IconButton>
            <button type="button" className={`${btn} w-[72px] h-[33px] gap-2`}>جدید<PageAddIcon className="w-6 h-6" /></button>
            <button type="button" className={`${btn} w-[76px] h-[33px] gap-2`}>حذف<TrashIcon className="w-[22px] h-[26px]" /></button>
            <button type="button" aria-label="چاپ" className="w-9 h-[33px] flex items-center justify-center rounded border border-[#20209a] bg-gradient-to-b from-[#ffd9a0] via-[#ffcb70] to-[#fff0a0]"><PrinterIcon className="w-6 h-6" /></button>
            <button type="button" disabled className="w-[94px] h-[33px] flex items-center justify-center gap-1 rounded border border-[#8e8e8e] bg-[#f0f0f0] text-[#8b8b8b]">چاپ فاکتور<PrintPagesIcon className="w-6 h-6" /></button>
            <button type="button" disabled className="w-[115px] h-[33px] flex items-center justify-center gap-1.5 rounded border border-[#8e8e8e] bg-[#f0f0f0] text-[#8b8b8b]">مشاهده فاکتور<PreviewIcon className="w-[22px] h-6" /></button>
            <button type="button" aria-label="تنظیمات چاپ" className="w-9 h-[33px] flex items-center justify-center rounded border border-[#8e8e8e] bg-[#f0f0f0]"><PrinterIcon muted gear className="w-7 h-7" /></button>
            <IconButton label="چاپ بارکد" className="w-9 h-[33px]"><BarcodePrintIcon className="w-[30px] h-7" /></IconButton>
            <IconButton label="تنظیمات" className="w-[33px] h-[33px]"><GearsIcon className="w-7 h-7" /></IconButton>
            <IconButton label="ماشین حساب" className="w-[33px] h-[33px]"><CalcIcon className="w-[26px] h-[26px]" /></IconButton>
            <IconButton label="راهنما" className="w-8 h-[33px]"><HelpIcon className="w-6 h-6" /></IconButton>
            <div className="flex gap-0.5 mr-auto">
                <IconButton label="آخرین" className="w-8 h-[33px]"><StepIcon flip bar className="w-[18px] h-[18px]" /></IconButton>
                <IconButton label="بعدی" className="w-8 h-[33px]"><StepIcon flip className="w-[18px] h-[18px]" /></IconButton>
                <IconButton label="قبلی" className="w-8 h-[33px]"><StepIcon className="w-[18px] h-[18px]" /></IconButton>
                <IconButton label="اولین" className="w-8 h-[33px]"><StepIcon bar className="w-[18px] h-[18px]" /></IconButton>
                <button type="button" className={`${btn} w-[71px] h-[33px] gap-1`}>خروج<ExitIcon className="w-[26px] h-[26px]" /></button>
            </div>
        </div>
    );
}

function InvoiceWindow() {
    return (
        <section className="absolute top-0.5 inset-x-[185px] border border-[#707070] bg-[#f1f1fa] shadow-[2px_4px_16px_rgba(0,0,0,0.4)]">
            <TitleBar />
            <div className="h-1.5 bg-[#2c9066]" />
            <nav role="tablist" className="flex items-end gap-1.5 h-[37px] pr-[7px] text-sm whitespace-nowrap">
                <button type="button" role="tab" aria-selected="true" className="relative z-10 w-[132px] h-[31px] -mb-px rounded-t-xl border-2 border-b-0 border-[#f4a973] bg-[linear-gradient(#ffffff_0%,#faf4e6_45%,#efe6cf_50%,#fdfcf8_100%)]">فاکتور فروش (F۴)</button>
                <button type="button" role="tab" aria-selected="false" className="w-[109px] h-[30px] rounded-t-xl border-2 border-b-0 border-[#d6d6da] bg-[linear-gradient(#ffffff_0%,#f0f0f5_45%,#dadae2_50%,#fafafc_100%)]">جسـتجو (F۳)</button>
            </nav>
            <div className="mx-1 border-2 border-t border-[#cfcfd8]">
                <InvoiceHead />
                <div className="mx-[5px] mt-1.5 border-t-2 border-dashed border-[#d6d6dd]" />
                <ItemSearch />
                <div className="mx-[5px] mt-[7px] mb-0.5 border border-t-0 border-[#dcdce6]">
                    <div className="flex items-center h-[22px] pr-1 gap-1.5">
                        <h2 className="font-bold text-[#7a3e10] whitespace-nowrap">اطلاعات فاکتور( F۷ )</h2>
                        <FloppyIcon className="w-[17px] h-[17px]" />
                        <div className="flex-1 mr-4 h-px bg-[repeating-linear-gradient(to_right,#dedee6_0_20px,transparent_20px_34px)]" />
                    </div>
                    <ItemsGrid />
                    <Splitter />
                    <div className="flex pb-0.5">
                        <PaymentPanel />
                        <Totals />
                    </div>
                </div>
            </div>
            <Toolbar />
            <footer className="mt-px h-[21px] px-0.5 border-t border-[#d5d5da] bg-[#f0f0f0] text-[13px] leading-[18px] whitespace-nowrap">
                درج فاکتور فروش شماره ۶۲۴۶ با مبلغ ۶,۵۰۰,۰۰۰ ریال و شخص میهن با شناسه ۷۳۱۶ توسط مدیر در تاریخ: ۱۴۰۳/۰۷/۲۸ ساعت: ۱۶:۰۰:۴۴
            </footer>
        </section>
    );
}

export default function App() {
    return (
        <div dir="rtl" className="relative min-h-screen overflow-hidden bg-white text-xs text-[#141414] font-[Roboto,'Noto_Sans_Arabic','DejaVu_Sans',sans-serif]">
            <main className="min-h-screen flex flex-col">
                <div className="flex justify-between items-start pt-[11px] pr-[11px] pl-[13px]">
                    <a href="#home" className="w-[159px] h-[57px] pr-7 pb-0.5 flex items-center gap-3 border border-[#dfdfe3] rounded text-[13px] whitespace-nowrap">
                        <svg viewBox="0 0 22 36" className="w-[22px] h-9" fill="none" stroke="#eba52d" strokeWidth="3" aria-hidden="true"><path d="M2 1l18 17L2 35" /></svg>
                        صفحه اصلی
                    </a>
                    <h1 className="pt-[19px] text-base leading-6 font-bold">معامله</h1>
                </div>
                <div className="flex-1 mx-[182px] pt-9">
                    <div className="h-[53px] rounded border border-[#dfa06a] bg-[#fbd9b8]" />
                    <div className="flex mt-5 h-[117px]">
                        <div className="flex-1 rounded border border-[#8394bd] bg-[#b4c3e4]" />
                        <div className="flex-1 rounded border border-[#cfcfd8] bg-[#f0f0f4]" />
                    </div>
                </div>
                <div className="flex justify-between items-center h-7 pr-4 pl-3.5 border-y border-[#e0ad4a] font-bold text-[13px] whitespace-nowrap">
                    <div className="flex items-center gap-2">
                        <CopyIcon className="w-[22px] h-5" />
                        <span>سـریـال قفـل:</span>
                        <span className="text-base leading-5">۴۵۸۲ - ۳</span>
                    </div>
                    <span>نسخـه نرم افـزار: ۶٫۶۱</span>
                </div>
                <div className="flex justify-between items-center h-[104px] pr-[19px] pl-[17px] whitespace-nowrap">
                    <div className="w-[180px] h-[76px] pr-1.5 flex items-center gap-4 rounded border border-[#84cd93] bg-[#eef9f1]">
                        <StopwatchIcon className="w-[58px] h-[60px]" />
                        <div className="text-[13px] leading-5">
                            <p>اعتبــار باقـی مانده:</p>
                            <p>۶۷ روز</p>
                        </div>
                    </div>
                    <div className="flex gap-2">
                        <div className="w-20 h-16 rounded border border-[#dfdfe3]" />
                        <button type="button" className="w-[153px] h-16 pr-1 flex items-center gap-3 rounded border border-[#dfdfe3] text-[13px]">
                            <PowerIcon className="w-[47px] h-[47px]" />
                            خروج از نرم افزار
                        </button>
                    </div>
                </div>
            </main>
            <InvoiceWindow />
        </div>
    );
}
